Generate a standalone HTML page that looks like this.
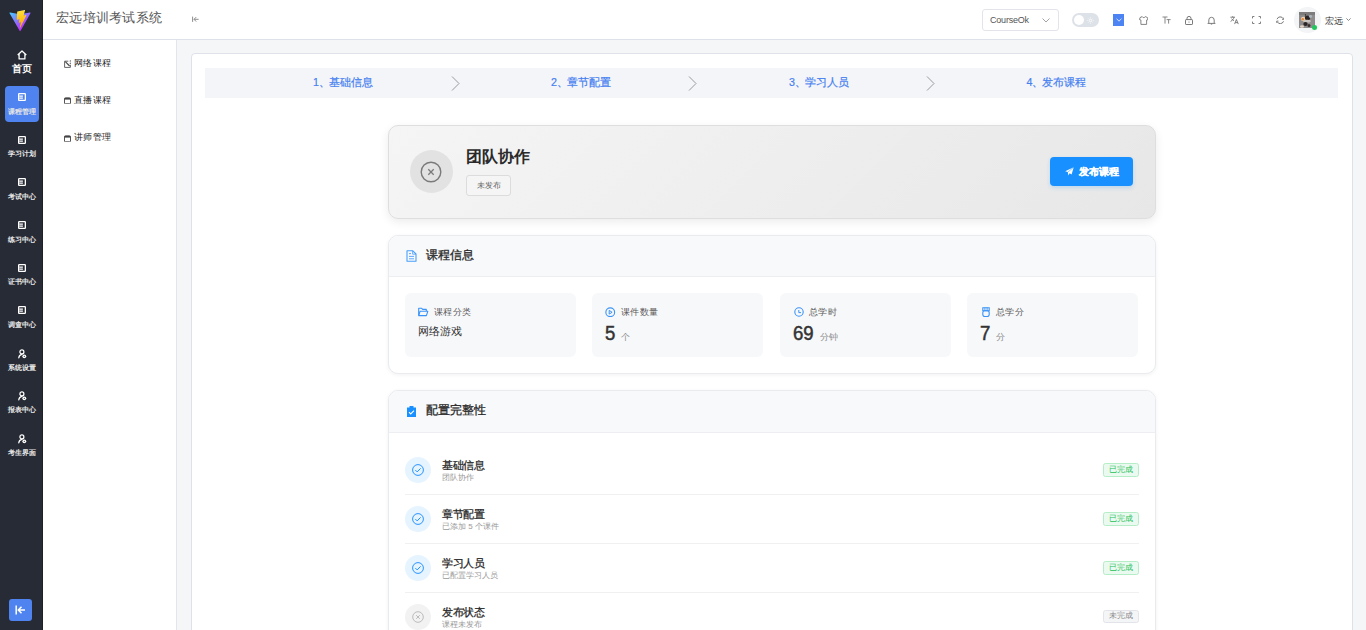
<!DOCTYPE html>
<html><head><meta charset="utf-8">
<style>
*{box-sizing:border-box;margin:0;padding:0}
html,body{width:1366px;height:630px;overflow:hidden;background:#f5f6f8;font-family:"Liberation Sans",sans-serif;color:#333}
.abs{position:absolute}
#side{position:absolute;left:0;top:0;width:43px;height:630px;background:#272b35;border-right:1px solid #1d2029}
#hdr{position:absolute;left:43px;top:0;width:1323px;height:40px;background:#fff;border-bottom:1px solid #dee1e8}
#sub{position:absolute;left:43px;top:40px;width:134px;height:590px;background:#fff;border-right:1px solid #e3e5eb}
.mi{position:absolute;left:0px;width:43px;height:36px;text-align:center;color:#fff}
.mi .lb{position:absolute;left:0;width:43px;top:20.6px;font-size:7.4px;line-height:10px;text-align:center;white-space:nowrap;font-weight:bold;color:#e6e6e6}
.mi svg{position:absolute;left:18px;top:7px}
.sm{position:absolute;left:20px;font-size:9px;letter-spacing:.25px;color:#222;white-space:nowrap;line-height:12px}
.sm svg{position:absolute;left:0.5px;top:3.5px}
.sm span{position:absolute;left:11px;top:0}
#card{position:absolute;left:191px;top:53px;width:1162px;height:600px;background:#fff;border:1px solid #dfe1e8;border-radius:4px}
#steps{position:absolute;left:205px;top:68px;width:1133px;height:30px;background:#f4f5f9}
.st{position:absolute;top:-1.2px;height:30px;line-height:30px;font-size:10.7px;color:#4580f0;-webkit-text-stroke:.2px #4580f0;white-space:nowrap}
.chev{position:absolute;top:7.5px}
.box{position:absolute;left:388px;width:768px;background:#fff;border:1px solid #e9ebef;border-radius:10px;box-shadow:0 1px 4px rgba(0,0,0,0.06)}
.bh{position:absolute;left:0;top:0;width:100%;background:#f8f9fb;border-bottom:1px solid #eceef2;border-radius:9px 9px 0 0}
.bt{position:absolute;left:37px;font-size:12px;font-weight:normal;-webkit-text-stroke:.3px #2a2a2a;color:#2a2a2a;white-space:nowrap}
.stat{position:absolute;top:57px;width:171px;height:64px;background:#f7f8fa;border-radius:6px}
.stat .l{position:absolute;left:29px;top:13px;font-size:9px;letter-spacing:.4px;color:#595959;white-space:nowrap}
.stat svg{position:absolute;left:13px;top:13px}
.stat .v{position:absolute;left:13px;top:28.5px;font-size:20px;font-weight:normal;-webkit-text-stroke:.5px #333;color:#333;white-space:nowrap}
.num{display:inline-block;transform:scaleX(.93);transform-origin:0 0}
.stat .u{font-size:9.4px;font-weight:normal;-webkit-text-stroke:0;color:#8c8c8c;margin-left:6px}
.row{position:absolute;left:15.5px;width:734px;height:49px;border-bottom:1px solid #f0f0f0}
.row .ic{position:absolute;left:0.5px;top:10.6px;width:26px;height:26px;border-radius:50%;background:#e6f4ff}
.row .t{position:absolute;left:37.5px;top:12.2px;font-size:11px;letter-spacing:-.4px;font-weight:normal;-webkit-text-stroke:.25px #262626;color:#262626;white-space:nowrap}
.row .s{position:absolute;left:37.5px;top:25.8px;font-size:8px;color:#999;white-space:nowrap}
.tag{position:absolute;right:0;top:17px;width:36px;height:13.5px;border-radius:2.5px;font-size:8px;line-height:11.5px;text-align:center;white-space:nowrap}
.ok{background:#ebfaf0;border:1px solid #b5edc6;color:#1fbf58}
.no{background:#f4f5f7;border:1px solid #e2e4e9;color:#888;height:12.5px;line-height:10.5px}
.hi{position:absolute;top:14px}
</style></head><body>

<div id="side">
  <svg class="abs" style="left:9.4px;top:10px" width="22" height="21.7" viewBox="0 0 410 404"><defs><linearGradient id="ga" x1="6" x2="235" y1="33" y2="344" gradientUnits="userSpaceOnUse"><stop stop-color="#41D1FF"/><stop offset="1" stop-color="#BD34FE"/></linearGradient><linearGradient id="gb" x1="194.651" x2="236.076" y1="8.818" y2="292.989" gradientUnits="userSpaceOnUse"><stop stop-color="#FFEA83"/><stop offset=".083" stop-color="#FFDD35"/><stop offset="1" stop-color="#FFA800"/></linearGradient></defs><path fill="url(#ga)" d="m399.641 59.525-183.998 329.02c-3.799 6.793-13.559 6.833-17.415.073L10.582 59.556C6.38 52.19 12.68 43.266 21.028 44.76l184.195 32.923c1.175.21 2.378.208 3.553-.006l180.343-32.87c8.32-1.517 14.649 7.337 10.522 14.719Z"/><path fill="url(#gb)" d="M292.965 1.574 156.801 28.255a5 5 0 0 0-4.030 4.611l-8.376 141.464c-.197 3.332 2.863 5.918 6.115 5.168l37.91-8.749c3.547-.818 6.752 2.306 6.023 5.873l-11.263 55.153c-.758 3.712 2.727 6.886 6.352 5.785l23.415-7.114c3.63-1.102 7.118 2.081 6.35 5.796l-17.899 86.633c-1.12 5.419 6.088 8.374 9.094 3.728l2.008-3.103 110.954-221.428c1.858-3.707-1.346-7.935-5.418-7.149l-39.022 7.531c-3.667.707-6.787-2.708-5.752-6.296l25.469-88.29c1.036-3.594-2.095-7.012-5.766-6.293Z"/></svg>
  <!-- home -->
  <div class="mi" style="top:44px">
    <svg width="10" height="10" viewBox="0 0 10 10" style="left:17px;top:5.5px"><path d="M.7 5 5 1 9.3 5M2.1 3.9V8.9H7.9V3.9" fill="none" stroke="#fff" stroke-width="1.3" stroke-linejoin="round"/></svg>
    <div class="lb" style="top:19px;font-size:9.6px;line-height:12px;font-weight:bold;color:#fff">首页</div>
  </div>
  <div class="abs" style="left:5px;top:86px;width:34px;height:36px;border-radius:4px;background:#4f83ef"></div><div class="mi" style="top:86px">
    <svg width="8" height="8" viewBox="0 0 8 8"><rect x=".65" y=".65" width="6.7" height="6.7" rx=".6" fill="none" stroke="#fff" stroke-width="1.3"/><path d="M1.3 3.1h3.6M1.3 5.1h3.6" stroke="#fff" stroke-width="1.1"/></svg>
    <div class="lb">课程管理</div>
  </div>
  <div class="mi" style="top:128.67px"><svg width="8" height="8" viewBox="0 0 8 8"><rect x=".65" y=".65" width="6.7" height="6.7" rx=".6" fill="none" stroke="#fff" stroke-width="1.3"/><path d="M1.3 3.1h3.6M1.3 5.1h3.6" stroke="#fff" stroke-width="1.1"/></svg><div class="lb">学习计划</div></div>
  <div class="mi" style="top:171.33px"><svg width="8" height="8" viewBox="0 0 8 8"><rect x=".65" y=".65" width="6.7" height="6.7" rx=".6" fill="none" stroke="#fff" stroke-width="1.3"/><path d="M1.3 3.1h3.6M1.3 5.1h3.6" stroke="#fff" stroke-width="1.1"/></svg><div class="lb">考试中心</div></div>
  <div class="mi" style="top:214px"><svg width="8" height="8" viewBox="0 0 8 8"><rect x=".65" y=".65" width="6.7" height="6.7" rx=".6" fill="none" stroke="#fff" stroke-width="1.3"/><path d="M1.3 3.1h3.6M1.3 5.1h3.6" stroke="#fff" stroke-width="1.1"/></svg><div class="lb">练习中心</div></div>
  <div class="mi" style="top:256.67px"><svg width="8" height="8" viewBox="0 0 8 8"><rect x=".65" y=".65" width="6.7" height="6.7" rx=".6" fill="none" stroke="#fff" stroke-width="1.3"/><path d="M1.3 3.1h3.6M1.3 5.1h3.6" stroke="#fff" stroke-width="1.1"/></svg><div class="lb">证书中心</div></div>
  <div class="mi" style="top:299.33px"><svg width="8" height="8" viewBox="0 0 8 8"><rect x=".65" y=".65" width="6.7" height="6.7" rx=".6" fill="none" stroke="#fff" stroke-width="1.3"/><path d="M1.3 3.1h3.6M1.3 5.1h3.6" stroke="#fff" stroke-width="1.1"/></svg><div class="lb">调查中心</div></div>
  <div class="mi" style="top:342px"><svg width="10" height="10" viewBox="0 0 10 10" style="left:17.5px;top:6.8px"><circle cx="3.9" cy="2.9" r="2" fill="none" stroke="#fff" stroke-width="1.2"/><path d="M.8 8.8C1 6.9 2.1 5.7 3.9 5.4" fill="none" stroke="#fff" stroke-width="1.3" stroke-linecap="round"/><circle cx="6.3" cy="7.3" r="1.9" fill="#fff"/><circle cx="6.3" cy="7.3" r=".6" fill="#272b35"/></svg><div class="lb">系统设置</div></div>
  <div class="mi" style="top:384.67px"><svg width="10" height="10" viewBox="0 0 10 10" style="left:17.5px;top:6.8px"><circle cx="3.9" cy="2.9" r="2" fill="none" stroke="#fff" stroke-width="1.2"/><path d="M.8 8.8C1 6.9 2.1 5.7 3.9 5.4" fill="none" stroke="#fff" stroke-width="1.3" stroke-linecap="round"/><circle cx="6.3" cy="7.3" r="1.9" fill="#fff"/><circle cx="6.3" cy="7.3" r=".6" fill="#272b35"/></svg><div class="lb">报表中心</div></div>
  <div class="mi" style="top:427.33px"><svg width="10" height="10" viewBox="0 0 10 10" style="left:17.5px;top:6.8px"><circle cx="3.9" cy="2.9" r="2" fill="none" stroke="#fff" stroke-width="1.2"/><path d="M.8 8.8C1 6.9 2.1 5.7 3.9 5.4" fill="none" stroke="#fff" stroke-width="1.3" stroke-linecap="round"/><circle cx="6.3" cy="7.3" r="1.9" fill="#fff"/><circle cx="6.3" cy="7.3" r=".6" fill="#272b35"/></svg><div class="lb">考生界面</div></div>
  <div class="abs" style="left:9px;top:599px;width:23px;height:22px;background:#4f83ef;border-radius:3px">
    <svg class="abs" style="left:6px;top:6px" width="11" height="10" viewBox="0 0 11 10"><path d="M1.2 .5v9M10 5H3.5M6.5 1.8 3.3 5l3.2 3.2" fill="none" stroke="#fff" stroke-width="1.5"/></svg>
  </div>
</div>

<div id="hdr">
  <div class="abs" style="left:13px;top:9px;font-size:13px;letter-spacing:.3px;color:#555;white-space:nowrap">宏远培训考试系统</div>
  <svg class="abs" style="left:148.5px;top:16.2px" width="7" height="7" viewBox="0 0 7 7"><path d="M.6 .6v5.3M6.6 3.3H2.2M4.2 1.1 2 3.3l2.2 2.3" fill="none" stroke="#808080" stroke-width=".9"/></svg>
</div>

<div id="sub">
  <div class="sm" style="top:16.5px"><svg width="8" height="8" viewBox="0 0 8 8" style="top:3px"><path d="M4.3 1.2H.6v6.2h5.8V4.8" fill="none" stroke="#555" stroke-width=".9"/><path d="M1.3 1.6 5.6 6" stroke="#444" stroke-width="1.1"/><path d="M5.8.8l1 .5M5.8 3l1 .4" stroke="#444" stroke-width="1.1"/></svg><span>网络课程</span></div>
  <div class="sm" style="top:53.8px"><svg width="7" height="7" viewBox="0 0 7 7"><rect x=".5" y=".8" width="6" height="6" rx=".8" fill="none" stroke="#555" stroke-width="1"/><path d="M.5 1.8h6" stroke="#444" stroke-width="1.6"/></svg><span>直播课程</span></div>
  <div class="sm" style="top:91px"><svg width="7" height="7" viewBox="0 0 7 7"><rect x=".5" y=".8" width="6" height="6" rx=".8" fill="none" stroke="#555" stroke-width="1"/><path d="M.5 1.8h6" stroke="#444" stroke-width="1.6"/></svg><span>讲师管理</span></div>
</div>

<div id="card"></div>
<div id="steps">
  <div class="st" style="left:108px">1<span style="margin-right:-1px">、</span>基础信息</div>
  <svg class="chev" style="left:246px" width="9" height="15" viewBox="0 0 9 15"><path d="M1 .5 8 7.5 1 14.5" fill="none" stroke="#999" stroke-width="1"/></svg>
  <div class="st" style="left:346px">2<span style="margin-right:-1px">、</span>章节配置</div>
  <svg class="chev" style="left:483px" width="9" height="15" viewBox="0 0 9 15"><path d="M1 .5 8 7.5 1 14.5" fill="none" stroke="#999" stroke-width="1"/></svg>
  <div class="st" style="left:584px">3<span style="margin-right:-1px">、</span>学习人员</div>
  <svg class="chev" style="left:721px" width="9" height="15" viewBox="0 0 9 15"><path d="M1 .5 8 7.5 1 14.5" fill="none" stroke="#999" stroke-width="1"/></svg>
  <div class="st" style="left:821.5px">4<span style="margin-right:-1px">、</span>发布课程</div>
</div>

<!-- hero -->
<div class="abs" style="left:388px;top:125px;width:768px;height:94px;border-radius:10px;border:1px solid #dedede;background:linear-gradient(135deg,#f5f5f5,#e7e7e7);box-shadow:0 3px 10px rgba(0,0,0,0.08)">
  <div class="abs" style="left:21px;top:24px;width:43px;height:43px;border-radius:50%;background:#e2e2e2">
    <svg class="abs" style="left:9.6px;top:11px" width="22" height="22" viewBox="0 0 22 22"><circle cx="11" cy="11" r="9.8" fill="none" stroke="#7a7a7a" stroke-width="1.4"/><path d="M8.3 8.3l5.4 5.4M13.7 8.3l-5.4 5.4" stroke="#7a7a7a" stroke-width="1.3"/></svg>
  </div>
  <div class="abs" style="left:77px;top:21.3px;font-size:16px;font-weight:bold;color:#2a2a2a;white-space:nowrap">团队协作</div>
  <div class="abs" style="left:77px;top:49px;width:45px;height:21px;border:1px solid #dcdcdc;border-radius:3px;background:#f5f5f5;font-size:8px;line-height:19px;text-align:center;color:#666">未发布</div>
  <div class="abs" style="left:661px;top:31px;width:83px;height:29px;border-radius:4px;background:#1890ff;box-shadow:0 2px 4px rgba(24,144,255,0.2)">
    <svg class="abs" style="left:14.8px;top:10px" width="9" height="9" viewBox="0 0 9 9"><path d="M8.7.3 .2 4.2 2.8 5.1 3.3 8.6 4.6 6.3 6.6 7.6Z" fill="#fff"/><path d="M8.7.3 2.9 5.1" stroke="#1890ff" stroke-width=".5"/></svg>
    <div class="abs" style="left:29px;top:8.2px;font-size:10px;font-weight:bold;-webkit-text-stroke:.3px #fff;color:#fff;white-space:nowrap">发布课程</div>
  </div>
</div>

<!-- course info -->
<div class="box" style="top:235px;height:138.5px">
  <div class="bh" style="height:41px"></div>
  <svg class="hi" style="left:17px" width="11" height="12" viewBox="0 0 11 12"><path d="M1 .8h5.8l3.2 3.2v7.2H1Z" fill="none" stroke="#4aa0fa" stroke-width="1.1" stroke-linejoin="round"/><path d="M6.6.8v3.4H10" fill="none" stroke="#4aa0fa" stroke-width=".8"/><path d="M3 3.6h2M3 6.4h5M3 8.8h5" stroke="#4aa0fa" stroke-width=".9"/></svg>
  <div class="bt" style="top:11px">课程信息</div>
  <div class="stat" style="left:16px">
    <svg width="10.5" height="9.5" viewBox="0 0 10.5 9.5" style="left:13.3px;top:14px"><path d="M.7 8.6V1.3h3l1 1.1h3.6v1.6" fill="none" stroke="#3b93f7" stroke-width="1.1" stroke-linejoin="round"/><path d="M.7 8.6 2 4.3h7.8L8.4 8.6Z" fill="none" stroke="#3b93f7" stroke-width="1.1" stroke-linejoin="round"/></svg>
    <div class="l">课程分类</div>
    <div class="v" style="font-size:11px;font-weight:normal;-webkit-text-stroke:0;top:31px;color:#333">网络游戏</div>
  </div>
  <div class="stat" style="left:203px">
    <svg width="10.5" height="10.5" viewBox="0 0 10.5 10.5" style="left:13.2px;top:13.8px"><circle cx="5.25" cy="5.25" r="4.4" fill="none" stroke="#3b93f7" stroke-width="1.1"/><path d="M4.2 3.4v3.7l2.9-1.85Z" fill="none" stroke="#3b93f7" stroke-width="1" stroke-linejoin="round"/></svg>
    <div class="l">课件数量</div>
    <div class="v"><span class="num" style="margin-right:-.8px">5</span><span class="u">个</span></div>
  </div>
  <div class="stat" style="left:391px">
    <svg width="10" height="10" viewBox="0 0 10 10" style="left:13.5px;top:14px"><circle cx="5" cy="5" r="4.2" fill="none" stroke="#3b93f7" stroke-width="1.1"/><path d="M4.8 3v2.6h2.2" fill="none" stroke="#3b93f7" stroke-width="1"/></svg>
    <div class="l">总学时</div>
    <div class="v"><span class="num" style="margin-right:-1.5px">69</span><span class="u">分钟</span></div>
  </div>
  <div class="stat" style="left:578px">
    <svg width="8" height="10.5" viewBox="0 0 8 10.5" style="left:14.5px;top:13.8px"><path d="M.8.7h6.4v3H.8Z" fill="none" stroke="#3b93f7" stroke-width="1.1"/><path d="M2.9.7v3M5.1.7v3" stroke="#3b93f7" stroke-width=".9"/><rect x=".8" y="3.7" width="6.4" height="5.9" rx="2" fill="none" stroke="#3b93f7" stroke-width="1.1"/></svg>
    <div class="l">总学分</div>
    <div class="v"><span class="num" style="margin-right:-.8px">7</span><span class="u">分</span></div>
  </div>
</div>

<!-- config -->
<div class="box" style="top:390px;height:260px">
  <div class="bh" style="height:42px"></div>
  <svg class="hi" style="left:18px;top:15px" width="9" height="11" viewBox="0 0 9 11"><path d="M0 1.5h9V11H0Z" fill="#1890ff"/><rect x="2.5" y="0" width="4" height="2.5" rx=".5" fill="#1890ff"/><path d="M2 6.2l1.7 1.7L7 4.6" fill="none" stroke="#fff" stroke-width="1.1"/></svg>
  <div class="bt" style="top:11px">配置完整性</div>
  <div class="row" style="top:55px">
    <div class="ic"><svg class="abs" style="left:7px;top:7px" width="12" height="12" viewBox="0 0 12 12"><circle cx="6" cy="6" r="5.4" fill="none" stroke="#2a93ff" stroke-width="1"/><path d="M3.4 6.1l1.8 1.8 3.4-3.5" fill="none" stroke="#1890ff" stroke-width="1"/></svg></div>
    <div class="t">基础信息</div><div class="s">团队协作</div>
    <div class="tag ok">已完成</div>
  </div>
  <div class="row" style="top:104px">
    <div class="ic"><svg class="abs" style="left:7px;top:7px" width="12" height="12" viewBox="0 0 12 12"><circle cx="6" cy="6" r="5.4" fill="none" stroke="#2a93ff" stroke-width="1"/><path d="M3.4 6.1l1.8 1.8 3.4-3.5" fill="none" stroke="#1890ff" stroke-width="1"/></svg></div>
    <div class="t">章节配置</div><div class="s">已添加 5 个课件</div>
    <div class="tag ok">已完成</div>
  </div>
  <div class="row" style="top:153px">
    <div class="ic"><svg class="abs" style="left:7px;top:7px" width="12" height="12" viewBox="0 0 12 12"><circle cx="6" cy="6" r="5.4" fill="none" stroke="#2a93ff" stroke-width="1"/><path d="M3.4 6.1l1.8 1.8 3.4-3.5" fill="none" stroke="#1890ff" stroke-width="1"/></svg></div>
    <div class="t">学习人员</div><div class="s">已配置学习人员</div>
    <div class="tag ok">已完成</div>
  </div>
  <div class="row" style="top:202px;border-bottom:none">
    <div class="ic" style="background:#f2f2f2"><svg class="abs" style="left:7px;top:7px" width="12" height="12" viewBox="0 0 12 12"><circle cx="6" cy="6" r="5.3" fill="none" stroke="#bbb" stroke-width="1"/><path d="M4.2 4.2l3.6 3.6M7.8 4.2l-3.6 3.6" stroke="#bbb" stroke-width="1"/></svg></div>
    <div class="t">发布状态</div><div class="s">课程未发布</div>
    <div class="tag no">未完成</div>
  </div>
</div>

<!-- header right -->
<div class="abs" style="left:982px;top:9px;width:77px;height:22px;border:1px solid #e2e4ea;border-radius:3px;background:#fff">
  <div class="abs" style="left:7px;top:4.5px;font-size:9px;color:#555;letter-spacing:-0.2px;white-space:nowrap">CourseOk</div>
  <svg class="abs" style="left:59px;top:8px" width="8" height="5" viewBox="0 0 8 5"><path d="M.5.5 4 4 7.5.5" fill="none" stroke="#999" stroke-width=".9"/></svg>
</div>
<div class="abs" style="left:1072.3px;top:13px;width:26.5px;height:14px;border-radius:7px;background:#dde1e8">
  <div class="abs" style="left:1.7px;top:2px;width:10px;height:10px;border-radius:50%;background:#fff"></div>
  <svg class="abs" style="left:14.5px;top:3.5px" width="7" height="7" viewBox="0 0 7 7"><circle cx="3.5" cy="3.5" r="1.3" fill="none" stroke="#fff" stroke-width=".8"/><path d="M3.5.2v.8M3.5 6v.8M.2 3.5h.8M6 3.5h.8M1.2 1.2l.5.5M5.3 5.3l.5.5M1.2 5.8l.5-.5M5.3 1.7l.5-.5" stroke="#fff" stroke-width=".6"/></svg>
</div>
<div class="abs" style="left:1112.6px;top:13.6px;width:11.7px;height:12.5px;background:#4d84f4">
  <svg class="abs" style="left:3px;top:4.5px" width="6" height="4" viewBox="0 0 6 4"><path d="M.5.6 3 3.2 5.5.6" fill="none" stroke="#dfe8fd" stroke-width=".9"/></svg>
</div>
<svg class="abs" style="left:1138.5px;top:15.5px" width="9.5" height="9" viewBox="0 0 9.5 9"><path d="M3.2.6 1 1.6.5 3.6 1.9 4V8.4h5.7V4l1.4-.4L8.5 1.6 6.3.6C6 1.3 5.4 1.6 4.75 1.6S3.5 1.3 3.2.6Z" fill="none" stroke="#707070" stroke-width=".85" stroke-linejoin="round"/></svg>
<svg class="abs" style="left:1161.5px;top:15.5px" width="9" height="8" viewBox="0 0 9 8"><path d="M.5 1h5M3 1v6.6M4.6 3.6h4M6.6 3.6v4" fill="none" stroke="#7a7a7a" stroke-width=".9"/></svg>
<svg class="abs" style="left:1184.5px;top:15.5px" width="8" height="9" viewBox="0 0 8 9"><rect x=".5" y="3.6" width="7" height="4.9" rx=".6" fill="none" stroke="#6a6a6a" stroke-width=".9"/><path d="M2 3.6V2.4a2 2 0 0 1 4 0v1.2" fill="none" stroke="#6a6a6a" stroke-width=".9"/><circle cx="4" cy="6" r=".6" fill="#6a6a6a"/></svg>
<svg class="abs" style="left:1207px;top:15.5px" width="9" height="9" viewBox="0 0 9 9"><path d="M1.8 7.4V4a2.7 2.7 0 0 1 5.4 0v3.4M.6 7.4h7.8" fill="none" stroke="#707070" stroke-width=".9" stroke-linejoin="round"/><path d="M3.8 8.1h1.4" stroke="#707070" stroke-width=".9"/></svg>
<svg class="abs" style="left:1229.5px;top:16px" width="9" height="8.5" viewBox="0 0 9 8.5"><path d="M.4 1.2h4.6M2.7.2v1M4 1.2C3.6 3 2.4 4.6.6 5.4M1.6 2.6c.6 1 1.4 1.8 2.3 2.2M4.6 8.1l1.8-4.6 1.9 4.6M5.3 6.6h2.3" fill="none" stroke="#6a6a6a" stroke-width=".85"/></svg>
<svg class="abs" style="left:1252px;top:15.5px" width="9" height="8" viewBox="0 0 9 8"><path d="M.5 2.4V.5h1.9M6.6.5h1.9v1.9M8.5 5.6v1.9H6.6M2.4 7.5H.5V5.6" fill="none" stroke="#707070" stroke-width=".9"/></svg>
<svg class="abs" style="left:1275.5px;top:15.5px" width="8.5" height="8.5" viewBox="0 0 8.5 8.5"><path d="M1 3.2A3.4 3.4 0 0 1 7.3 2.8M7.5 5.3A3.4 3.4 0 0 1 1.2 5.7" fill="none" stroke="#6a6a6a" stroke-width=".9"/><path d="M7.8 1.6v1.8H6M.7 6.9V5.1h1.8" fill="none" stroke="#6a6a6a" stroke-width=".8"/></svg>
<div class="abs" style="left:1294px;top:7px;width:26.5px;height:26px;border-radius:50%;background:#f3f4f6"></div>
<svg class="abs" style="left:1299px;top:12px" width="16" height="16" viewBox="0 0 16 16">
<rect width="16" height="16" fill="#8e8c8c"/>
<rect x="0" y="0" width="16" height="3" fill="#7d7b7b"/>
<ellipse cx="4.5" cy="7" rx="2.6" ry="2.2" fill="#f2d2b0"/>
<ellipse cx="3.8" cy="7.2" rx="1.3" ry="1.2" fill="#e08a3c"/>
<ellipse cx="8.5" cy="6" rx="2.6" ry="2.4" fill="#2a2424"/>
<ellipse cx="11.5" cy="4.5" rx="1.6" ry="1.4" fill="#a9b4bf"/>
<ellipse cx="8" cy="9.2" rx="3.8" ry="1.4" fill="#c9c4c0"/>
<ellipse cx="6.5" cy="12" rx="2.2" ry="2" fill="#2c2525"/>
<ellipse cx="3" cy="14.5" rx="2" ry="1.2" fill="#e6d6c6"/>
<ellipse cx="10" cy="13.5" rx="1.5" ry="1.6" fill="#3a3030"/>
<circle cx="6.5" cy="3" r=".7" fill="#222"/>
</svg>
<div class="abs" style="left:1311.8px;top:25px;width:5.5px;height:4.5px;border-radius:50%;background:#22c55e"></div>
<div class="abs" style="left:1324.8px;top:14.6px;font-size:9.4px;color:#333;white-space:nowrap">宏远</div>
<svg class="abs" style="left:1345.5px;top:18.3px" width="5" height="3" viewBox="0 0 5 3"><path d="M.4.4 2.5 2.5 4.6.4" fill="none" stroke="#666" stroke-width=".75"/></svg>

</body></html>
